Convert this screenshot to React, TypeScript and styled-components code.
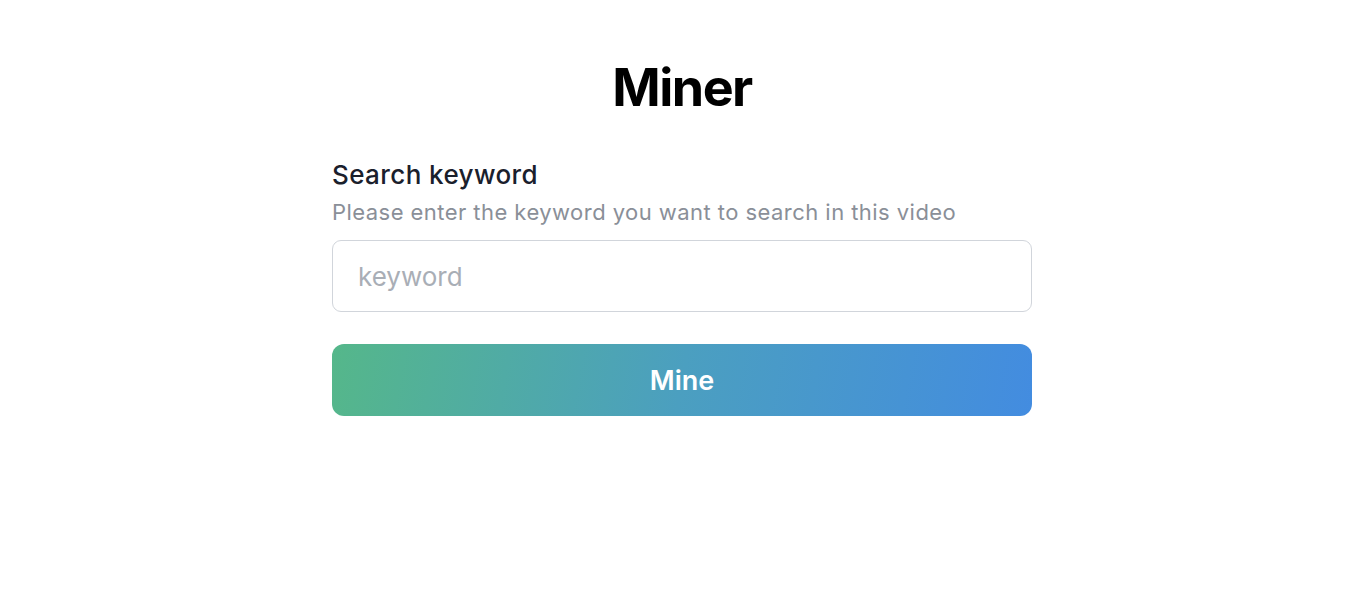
import React, { useState } from "react";
import styled, { createGlobalStyle } from "styled-components";

const GlobalStyle = createGlobalStyle`
    html, body {
        margin: 0;
        padding: 0;
        background: #ffffff;
        font-family: Inter, "Noto Sans", sans-serif;
    }
`;

const Page = styled.main`
    display: flex;
    flex-direction: column;
    align-items: center;
    padding: 54px 0 0 8px;
`;

const Title = styled.h1`
    margin: 0;
    font-size: 52px;
    font-weight: 700;
    line-height: 68px;
    letter-spacing: -1.5px;
    color: #000000;
`;

const Form = styled.form`
    display: flex;
    flex-direction: column;
    width: 700px;
    margin-top: 35px;
`;

const Label = styled.label`
    font-size: 26px;
    font-weight: 500;
    line-height: 36px;
    letter-spacing: 0.4px;
    color: #1a202c;
`;

const Helper = styled.p`
    margin: 4px 0 13px;
    font-size: 22px;
    line-height: 30px;
    letter-spacing: 0.45px;
    color: #8a8f98;
`;

const Input = styled.input`
    box-sizing: border-box;
    width: 100%;
    height: 72px;
    padding: 0 25px;
    border: 1.5px solid #d1d5db;
    border-radius: 9px;
    font-family: inherit;
    font-size: 26px;
    color: #1a202c;
    outline: none;

    &::placeholder {
        color: #a9aeb6;
    }
`;

const Button = styled.button`
    height: 72px;
    margin-top: 32px;
    border: none;
    border-radius: 12px;
    background: linear-gradient(100deg, #55b78a 0%, #4b9fc0 50%, #438ce0 100%);
    color: #ffffff;
    font-family: inherit;
    font-size: 27px;
    font-weight: 600;
    cursor: pointer;
`;

const App = () => {
    const [keyword, setKeyword] = useState("");

    return (
        <>
            <GlobalStyle />
            <Page>
                <Title>Miner</Title>
                <Form onSubmit={e => e.preventDefault()}>
                    <Label htmlFor="keyword">Search keyword</Label>
                    <Helper>Please enter the keyword you want to search in this video</Helper>
                    <Input
                        id="keyword"
                        placeholder="keyword"
                        value={keyword}
                        onChange={e => setKeyword(e.target.value)}
                    />
                    <Button type="submit">Mine</Button>
                </Form>
            </Page>
        </>
    );
};

export default App;
